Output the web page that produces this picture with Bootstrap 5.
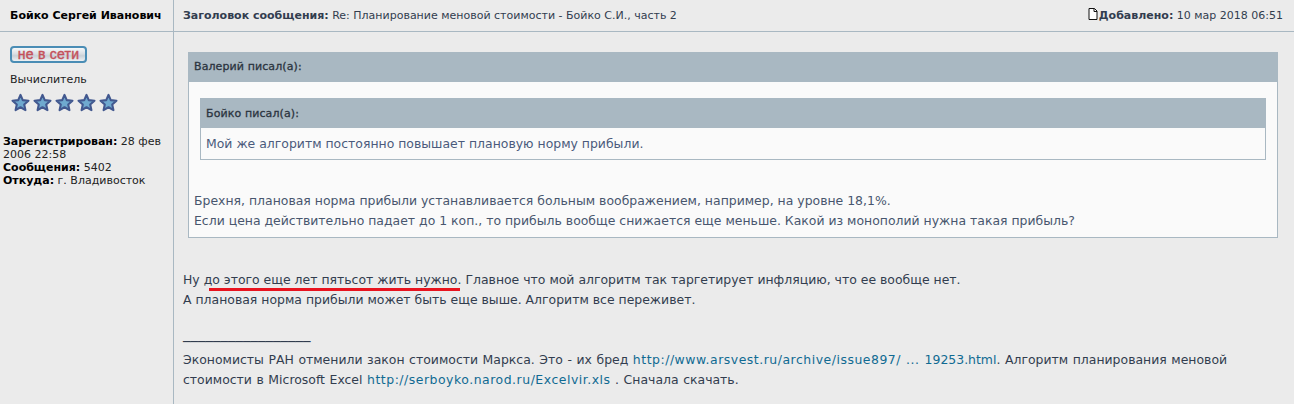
<!DOCTYPE html>
<html lang="ru">
<head>
<meta charset="utf-8">
<title>Сообщение</title>
<link href="https://cdn.jsdelivr.net/npm/bootstrap@5.3.0/dist/css/bootstrap.min.css" rel="stylesheet">
<style>
html,body{height:404px;overflow:hidden}
body{background:#ebebeb;font-family:"DejaVu Sans",Verdana,sans-serif;font-size:12.44px;color:#323d4f}
.forum-left{width:174px;flex:none;border-right:1px solid #a9b8c2}
.forum-head{height:32px;border-bottom:1px solid #a9b8c2;font-size:11px;line-height:32px}
.forum-name{padding-left:10px;font-weight:700;color:#000;font-size:11px;white-space:nowrap}
.forum-subj{padding:0 11px 0 9px}
.forum-subj b{color:#323d4f}
.forum-body{height:372px}
.status-btn{width:77px;height:17px;margin:14px 0 0 10px;border:2px solid #4a8db5;border-radius:4px;background:linear-gradient(#f6f8f9,#dadfe3 45%,#c9d1d7 60%,#eef1f3);color:#c4505a;font-family:"Liberation Sans",Arial,sans-serif;font-size:14px;line-height:13px;text-align:center;letter-spacing:.25px;-webkit-text-stroke:.4px #c4505a}
.rank{margin:10px 0 0 10px;font-size:11px;line-height:14px;color:#222}
.stars{margin:6px 0 0 11px;height:21px;gap:3px}
.stars svg{width:19px;height:19px;display:block;filter:blur(.35px)}
.star-shape{fill:#6fa9cf;stroke:#42588f;stroke-width:2.200;stroke-linejoin:round}
.profile{margin:21px 0 0 3px;font-size:11px;line-height:13px;color:#222}
.profile b{color:#000}
.msg{padding:20px 16px 0 9px;line-height:20px;color:#323d4f}
.qt{border:1px solid #a9b8c2;background:#fafafa;color:#48566e}
.qt-outer{margin:0 0 0 5px;height:186px}
.qt-inner{margin:16px 11px 0 11px;height:62px;color:#4a5a7c}
.qt-head{background:#a9b8c2;height:29px;font-size:11px;-webkit-text-stroke:.3px #2b3440;letter-spacing:.1px;line-height:28px;padding-left:5px;color:#2b3440}
.qt-inner .qt-head{line-height:30px}
.qt-text{padding:6px 5px}
.qt-after{padding:31px 5px 0 5px}
.reply{margin-top:32px}
.marked{position:relative}
.marked::after{content:"";position:absolute;left:5px;right:1px;bottom:-4px;height:3px;background:#e8141f}
.sig-rule{margin:13px 0 7px;line-height:20px;font-size:15px;white-space:nowrap}
.sig{line-height:20px;word-spacing:.6px}
.sig a{color:#106a92;text-decoration:none}
.wide-url{letter-spacing:.52px}
.page-ico{display:inline-block;vertical-align:-1px;width:10px;height:12px;margin-right:1px}
</style>
</head>
<body>
<svg class="d-none"><symbol id="star" viewBox="0 0 20 20"><path class="star-shape" d="M10 2l2.400 5.500 6 .6-4.500 4 1.300 5.900L10 15l-5.200 3 1.300-5.900-4.500-4 6-.6z"/></symbol></svg>
<div class="d-flex forum-head">
  <div class="forum-left forum-name">Бойко Сергей Иванович</div>
  <div class="flex-grow-1 d-flex justify-content-between forum-subj">
    <div><b>Заголовок сообщения:</b> Re: Планирование меновой стоимости - Бойко С.И., часть 2</div>
    <div><svg class="page-ico" viewBox="0 0 10 12"><path d="M1 .5h5.500L9 3v8.500H1z" fill="#fff" stroke="#111"/><path d="M6 .5V3.500H9" fill="none" stroke="#111"/></svg><b>Добавлено:</b> 10 мар 2018 06:51</div>
  </div>
</div>
<div class="d-flex forum-body">
  <div class="forum-left">
    <div class="status-btn">не в сети</div>
    <div class="rank">Вычислитель</div>
    <div class="d-flex stars">
      <svg><use href="#star"/></svg>
      <svg><use href="#star"/></svg>
      <svg><use href="#star"/></svg>
      <svg><use href="#star"/></svg>
      <svg><use href="#star"/></svg>
    </div>
    <div class="profile"><b>Зарегистрирован:</b> 28 фев 2006 22:58<br><b>Сообщения:</b> 5402<br><b>Откуда:</b> г. Владивосток</div>
  </div>
  <div class="flex-grow-1 msg">
    <div class="qt qt-outer">
      <div class="qt-head">Валерий писал(а):</div>
      <div class="qt qt-inner">
        <div class="qt-head">Бойко писал(а):</div>
        <div class="qt-text">Мой же алгоритм постоянно повышает плановую норму прибыли.</div>
      </div>
      <div class="qt-after">Брехня, плановая норма прибыли устанавливается больным воображением, например, на уровне 18,1%.<br>Если цена действительно падает до 1 коп., то прибыль вообще снижается еще меньше. Какой из монополий нужна такая прибыль?</div>
    </div>
    <div class="reply">Ну <span class="marked">до этого еще лет пятьсот жить нужно.</span> Главное что мой алгоритм так таргетирует инфляцию, что ее вообще нет.<br>А плановая норма прибыли может быть еще выше. Алгоритм все переживет.</div>
    <div class="sig-rule">_________________</div>
    <div class="sig">Экономисты РАН отменили закон стоимости Маркса. Это - их бред <a href="#"><span class="wide-url">http://www.arsvest.ru/archive/issue897/ ... </span>19253.html</a>. Алгоритм планирования меновой стоимости в Microsoft Excel <a href="#" class="wide-url">http://serboyko.narod.ru/Excelvir.xls</a> . Сначала скачать.</div>
  </div>
</div>
<script src="https://cdn.jsdelivr.net/npm/bootstrap@5.3.0/dist/js/bootstrap.bundle.min.js"></script>
</body>
</html>
